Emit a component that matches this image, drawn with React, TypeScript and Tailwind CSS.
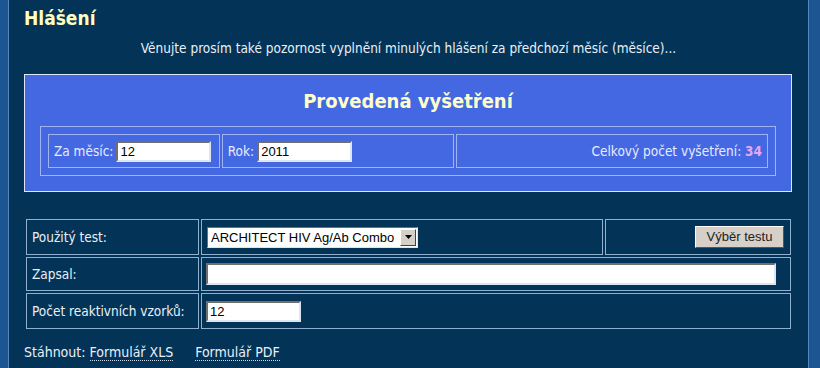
import React from "react";

const inputCls =
  "h-[21px] bg-white px-[2px] text-[13px] text-black font-['Liberation_Sans',Arial,sans-serif] outline-none border-2 border-t-[#6f6f6f] border-l-[#6f6f6f] border-b-[#dce6f2] border-r-[#dce6f2]";

function Cell({ className = "", children }: { className?: string; children?: React.ReactNode }) {
  return (
    <div className={`flex items-center border border-[#8fb0cf] px-[5px] ${className}`}>{children}</div>
  );
}

export default function App() {
  return (
    <div className="flex h-[368px] w-[820px] overflow-hidden bg-[#033457] text-[13.5px] text-[#e9eff7] font-[Tahoma,'DejaVu_Sans_Condensed','Liberation_Sans',sans-serif]">
      {/* left stripe */}
      <div className="w-[8px] shrink-0 bg-[#1d5593]" />
      <div className="w-px shrink-0 bg-[#5588c0]" />

      <main className="flex-1 pl-[15px] pr-[15px]">
        <h1 className="pt-[6px] text-[19px] leading-[24px] font-bold text-[#ffffc4]">Hlášení</h1>

        <p className="mt-[10px] text-center leading-[16px]">
          Věnujte prosím také pozornost vyplnění minulých hlášení za předchozí měsíc (měsíce)...
        </p>

        {/* Provedená vyšetření */}
        <section className="mt-[18px] w-[768px] border border-[#dfe7fb] bg-[#4467e2] px-[15px] pt-[14px] pb-[15px]">
          <h2 className="text-center text-[20px] leading-[24px] font-bold text-[#ffffcc]">
            Provedená vyšetření
          </h2>
          <div className="mt-[13px] flex gap-[2px] border border-[#9fb5f2] p-[7px] text-[#e6ecff]">
            <div className="flex h-[34px] w-[172px] items-center border border-[#9fb5f2] pl-[5px]">
              <span>Za měsíc:</span>
              <input className={`${inputCls} ml-[3px] w-[95px]`} defaultValue="12" />
            </div>
            <div className="flex h-[34px] w-[233px] items-center border border-[#9fb5f2] pl-[5px]">
              <span>Rok:</span>
              <input className={`${inputCls} ml-[3px] w-[95px]`} defaultValue="2011" />
            </div>
            <div className="flex h-[34px] w-[312px] items-center justify-end border border-[#9fb5f2] pr-[5px]">
              <span>
                Celkový počet vyšetření: <b className="text-[#e6a6f2]">34</b>
              </span>
            </div>
          </div>
        </section>

        {/* form table */}
        <div className="mt-[27px] ml-[2px] grid grid-cols-[173px_402px_186px] gap-[2px]">
          <Cell className="h-[36px]">Použitý test:</Cell>
          <Cell className="h-[36px]">
            <div className="relative h-[21px] w-[211px]">
              <select
                className="h-full w-full appearance-none border border-t-[#6f6f6f] border-l-[#6f6f6f] border-b-[#dce6f2] border-r-[#dce6f2] bg-white pl-[3px] text-[13px] text-black outline-none font-['Liberation_Sans',Arial,sans-serif]"
                defaultValue="ARCHITECT HIV Ag/Ab Combo"
              >
                <option>ARCHITECT HIV Ag/Ab Combo</option>
              </select>
              <span className="pointer-events-none absolute right-[2px] top-[2px] flex h-[17px] w-[16px] items-center justify-center border border-t-white border-l-white border-b-[#404040] border-r-[#404040] bg-[#d4d0c8]">
                <svg width="7" height="4" viewBox="0 0 7 4">
                  <path d="M0 0h7L3.5 4z" fill="#000" />
                </svg>
              </span>
            </div>
          </Cell>
          <Cell className="h-[36px] justify-end pr-[6px]">
            <button className="h-[22px] w-[89px] border border-t-white border-l-white border-b-[#555] border-r-[#555] bg-[#d6d0c9] text-[13px] text-[#222] font-['Liberation_Sans',Arial,sans-serif]">
              Výběr testu
            </button>
          </Cell>

          <Cell className="h-[34px]">Zapsal:</Cell>
          <Cell className="col-span-2 h-[34px] pl-[4px]">
            <input className={`${inputCls} h-[22px] w-[570px]`} defaultValue="" />
          </Cell>

          <Cell className="h-[36px]">Počet reaktivních vzorků:</Cell>
          <Cell className="col-span-2 h-[36px] pl-[4px]">
            <input className={`${inputCls} w-[95px]`} defaultValue="12" />
          </Cell>
        </div>

        <div className="mt-[15px] flex text-[14px] leading-[16px]">
          <span>Stáhnout:</span>
          <a className="ml-[4px] border-b border-dotted border-[#c8d6e6]">Formulář XLS</a>
          <a className="ml-[22px] border-b border-dotted border-[#c8d6e6]">Formulář PDF</a>
        </div>
      </main>

      {/* right stripe */}
      <div className="w-px shrink-0 bg-[#5588c0]" />
      <div className="w-[11px] shrink-0 bg-[#1d5593]" />
    </div>
  );
}
